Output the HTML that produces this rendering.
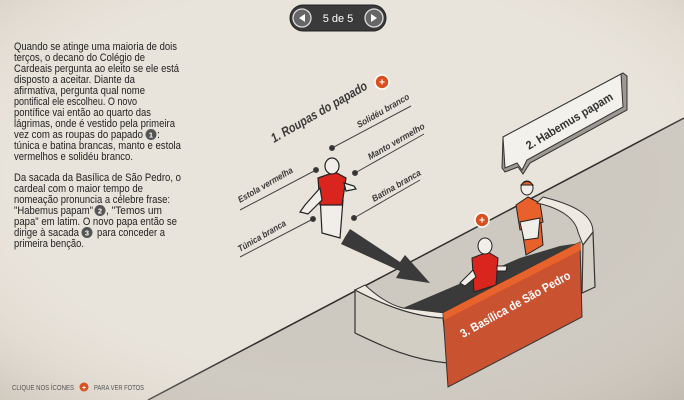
<!DOCTYPE html>
<html><head><meta charset="utf-8"><style>
html,body{margin:0;padding:0}
body{width:684px;height:400px;overflow:hidden;background:#e9e4db;position:relative;font-family:"Liberation Sans",sans-serif}
svg{position:absolute;left:0;top:0}
</style></head><body>
<svg width="684" height="400" viewBox="0 0 684 400" font-family="Liberation Sans, sans-serif">
<defs><radialGradient id="bg" cx="0.5" cy="0.45" r="0.75"><stop offset="0.6" stop-color="#e9e4db" stop-opacity="0"/><stop offset="1" stop-color="#b8ada0" stop-opacity="0.5"/></radialGradient></defs>
<polygon points="148,400 684,118 684,400" fill="#cdc8c0"/>
<line x1="148" y1="400" x2="684" y2="118" stroke="#2f2f2f" stroke-width="1.5"/>
<rect width="684" height="400" fill="url(#bg)"/>
<!-- nav -->
<rect x="290" y="5" width="96" height="26" rx="13" fill="#3a3a3a" stroke="#222"/>
<circle cx="302" cy="18" r="9" fill="#666" stroke="#ddd" stroke-width="1.3"/>
<polygon points="299,18 305,14 305,22" fill="#fff"/>
<circle cx="374" cy="18" r="9" fill="#666" stroke="#ddd" stroke-width="1.3"/>
<polygon points="377,18 371,14 371,22" fill="#fff"/>
<text x="338" y="22" fill="#fff" font-size="11" text-anchor="middle">5 de 5</text>
<!-- left text -->
<g font-size="10.6" fill="#222">
<text x="14" y="50" textLength="163" lengthAdjust="spacingAndGlyphs">Quando se atinge uma maioria de dois</text>
<text x="14" y="61" textLength="131" lengthAdjust="spacingAndGlyphs">terços, o decano do Colégio de</text>
<text x="14" y="72" textLength="165" lengthAdjust="spacingAndGlyphs">Cardeais pergunta ao eleito se ele está</text>
<text x="14" y="83" textLength="121" lengthAdjust="spacingAndGlyphs">disposto a aceitar. Diante da</text>
<text x="14" y="94" textLength="131" lengthAdjust="spacingAndGlyphs">afirmativa, pergunta qual nome</text>
<text x="14" y="105" textLength="123" lengthAdjust="spacingAndGlyphs">pontifical ele escolheu. O novo</text>
<text x="14" y="116" textLength="137" lengthAdjust="spacingAndGlyphs">pontífice vai então ao quarto das</text>
<text x="14" y="127" textLength="161" lengthAdjust="spacingAndGlyphs">lágrimas, onde é vestido pela primeira</text>
<text x="14" y="138" textLength="129" lengthAdjust="spacingAndGlyphs">vez com as roupas do papado</text>
<text x="157" y="138">:</text>
<text x="14" y="149" textLength="167" lengthAdjust="spacingAndGlyphs">túnica e batina brancas, manto e estola</text>
<text x="14" y="160" textLength="119" lengthAdjust="spacingAndGlyphs">vermelhos e solidéu branco.</text>
<text x="14" y="181" textLength="167" lengthAdjust="spacingAndGlyphs">Da sacada da Basílica de São Pedro, o</text>
<text x="14" y="192" textLength="129" lengthAdjust="spacingAndGlyphs">cardeal com o maior tempo de</text>
<text x="14" y="203" textLength="156" lengthAdjust="spacingAndGlyphs">nomeação pronuncia a célebre frase:</text>
<text x="14" y="214" textLength="79" lengthAdjust="spacingAndGlyphs">"Habemus papam"</text>
<text x="106" y="214" textLength="56" lengthAdjust="spacingAndGlyphs">, "Temos um</text>
<text x="14" y="225" textLength="163" lengthAdjust="spacingAndGlyphs">papa" em latim. O novo papa então se</text>
<text x="14" y="236" textLength="65" lengthAdjust="spacingAndGlyphs">dirige à sacada</text>
<text x="97" y="236" textLength="68" lengthAdjust="spacingAndGlyphs">para conceder a</text>
<text x="14" y="247" textLength="70" lengthAdjust="spacingAndGlyphs">primeira benção.</text>
</g>
<g fill="#555"><circle cx="151" cy="134.5" r="5.5"/><circle cx="100" cy="210.5" r="5.5"/><circle cx="87" cy="232.5" r="5.5"/></g>
<g fill="#fff" font-size="7.5" text-anchor="middle" font-weight="bold"><text x="151" y="137.5">1</text><text x="100" y="213.5">2</text><text x="87" y="235.5">3</text></g>
<!-- labels -->
<g fill="#3a3a3a" font-style="italic" font-weight="bold">
<text transform="translate(274,143) rotate(-30)" font-size="13" textLength="109" lengthAdjust="spacingAndGlyphs">1. Roupas do papado</text>
<text transform="translate(359,128) rotate(-30)" font-size="9" textLength="59" lengthAdjust="spacingAndGlyphs">Solidéu branco</text>
<text transform="translate(370,160) rotate(-30)" font-size="9" textLength="64" lengthAdjust="spacingAndGlyphs">Manto vermelho</text>
<text transform="translate(374,202) rotate(-30)" font-size="9" textLength="55" lengthAdjust="spacingAndGlyphs">Batina branca</text>
<text transform="translate(240,203) rotate(-30)" font-size="9" textLength="62" lengthAdjust="spacingAndGlyphs">Estola vermelha</text>
<text transform="translate(240,252) rotate(-30)" font-size="9" textLength="54" lengthAdjust="spacingAndGlyphs">Túnica branca</text>
</g>
<g stroke="#444" stroke-width="1" fill="#333">
<line x1="332" y1="148" x2="411" y2="106"/><circle cx="332" cy="148" r="2.5"/>
<line x1="355" y1="173" x2="424" y2="134"/><circle cx="355" cy="173" r="2.5"/>
<line x1="354" y1="218" x2="420" y2="180"/><circle cx="354" cy="218" r="2.5"/>
<line x1="240" y1="210" x2="316" y2="170"/><circle cx="316" cy="170" r="2.5"/>
<line x1="240" y1="257" x2="313" y2="219"/><circle cx="313" cy="219" r="2.5"/>
</g>
<circle cx="382" cy="82" r="7" fill="#d8501f" stroke="#fff" stroke-width="1.5"/>
<text x="382" y="85.5" fill="#fff" font-size="10" text-anchor="middle" font-weight="bold">+</text>
<!-- pope figure -->
<g stroke="#222" stroke-width="1.2">
<path d="M320,195 L322,233 L340,238 L343,200 Z" fill="#f1eeea"/>
<path d="M318,178 L335,172 L346,178 L342,205 L320,205 Z" fill="#d9251e"/>
<path d="M320,188 L305,205 L300,212 L308,214 L322,200 Z" fill="#f1eeea"/>
<path d="M344,183 L354,186 L356,189 L346,191 Z" fill="#f1eeea"/>
<ellipse cx="332" cy="166" rx="7" ry="8" fill="#f1eeea"/>
</g>
<!-- arrow -->
<polygon points="345,237 350,229 400,262 405,255 430,283 396,278 400,271 341,244" fill="#3a3a3a"/>
<!-- speech bubble -->
<polygon points="503,137 623,73 627,76 627,110 530,163 523,174 518,167 505,172 502,168" fill="#9d9891" stroke="#333"/>
<polygon points="503,137 621,74 623,107 527,160 522,170 517,163 505,168" fill="#f3f1ec" stroke="#333"/>
<text transform="translate(529,150) rotate(-31)" font-size="12" font-weight="bold" fill="#333" textLength="99" lengthAdjust="spacingAndGlyphs">2. Habemus papam</text>
<!-- balcony -->
<path d="M355,290 C380,303 410,316 443,318 L448,363 C410,360 380,345 355,333 Z" fill="#d3cec4" stroke="#333" stroke-width="1.2"/>
<path d="M355,290 L365,285 C378,297 390,305 403,308 L445,313 L443,318 C410,316 380,303 355,290 Z" fill="#eeeae2" stroke="#333" stroke-width="1"/>
<polygon points="403,308 445,313 580,243 560,246 520,258" fill="#3a3a3a"/>
<!-- cardinal -->
<g stroke="#222" stroke-width="1">
<path d="M520,217 L540,212 L543,245 L526,255 Z" fill="#e8602a"/>
<path d="M516,205 L528,197 L540,203 L543,222 L520,230 Z" fill="#e8602a"/>
<path d="M520,222 L540,218 L538,238 L524,240 Z" fill="#f1eeea"/>
<ellipse cx="527" cy="188" rx="6" ry="7" fill="#f1eeea"/>
<path d="M521,185 Q527,178 533,185 Z" fill="#e8602a"/>
</g>
<path d="M543,197 C575,205 593,215 593,232 L583,245 L578,232 C575,218 560,208 537,203 Z" fill="#eeeae2" stroke="#333" stroke-width="1"/>
<path d="M593,232 L595,287 L582,293 L583,245 Z" fill="#d3cec4" stroke="#333" stroke-width="1.2"/>
<!-- pope on balcony -->
<g stroke="#222" stroke-width="1">
<path d="M472,258 L488,252 L498,258 L496,285 L474,292 Z" fill="#d9251e"/>
<path d="M473,270 L460,283 L465,286 L476,277 Z" fill="#f1eeea"/>
<path d="M497,266 L507,266 L506,271 L497,271 Z" fill="#f1eeea"/>
<ellipse cx="485" cy="246" rx="7" ry="8" fill="#f1eeea"/>
</g>
<circle cx="482" cy="220" r="7" fill="#d8501f" stroke="#fff" stroke-width="1.5"/>
<text x="482" y="223.5" fill="#fff" font-size="10" text-anchor="middle" font-weight="bold">+</text>
<!-- banner -->
<polygon points="443,313 580,242 582,317 448,387" fill="#c95230" stroke="#333"/>
<polygon points="443,313 580,242 581,250 444,320" fill="#e8622c"/>
<text transform="translate(463,338) rotate(-29)" font-size="12" font-weight="bold" fill="#fff" textLength="124" lengthAdjust="spacingAndGlyphs">3. Basílica de São Pedro</text>
<!-- footer -->
<text x="12" y="390" font-size="7.5" fill="#555" textLength="62" lengthAdjust="spacingAndGlyphs">CLIQUE NOS ÍCONES</text>
<circle cx="84" cy="387" r="4.5" fill="#d8501f"/>
<text x="84" y="390" fill="#fff" font-size="7" text-anchor="middle" font-weight="bold">+</text>
<text x="94" y="390" font-size="7.5" fill="#555" textLength="50" lengthAdjust="spacingAndGlyphs">PARA VER FOTOS</text>
</svg>
</body></html>
